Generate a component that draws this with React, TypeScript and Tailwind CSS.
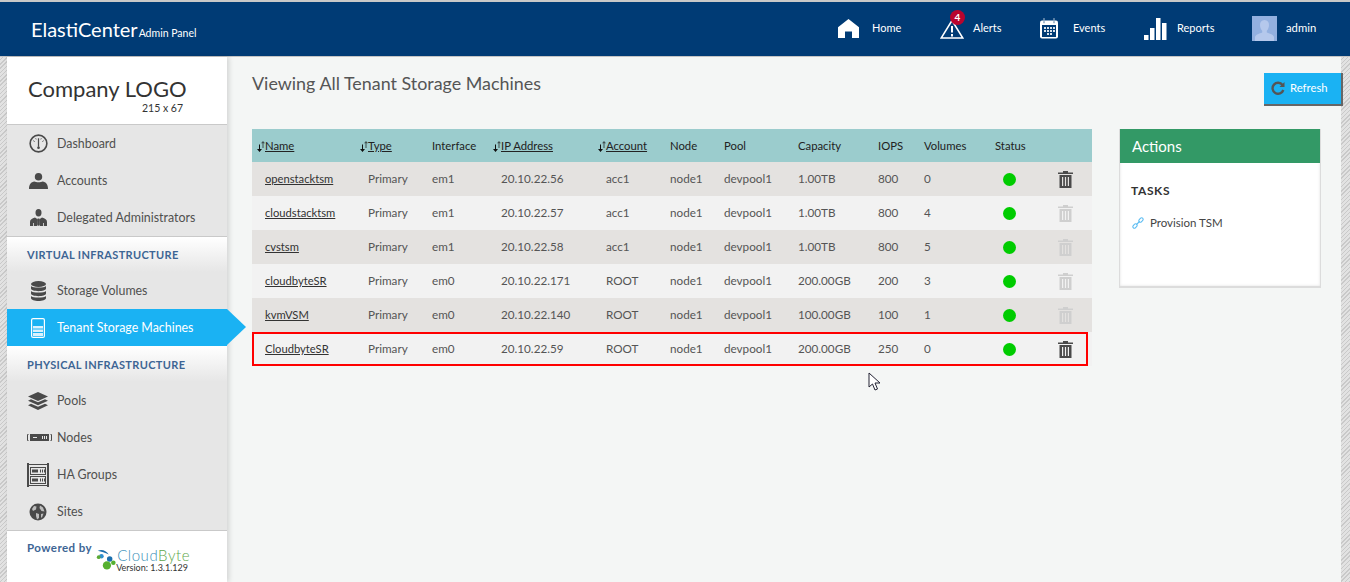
import React from "react";

const font = "font-['Lato','Noto_Sans',sans-serif]";

const Trash = ({ off }: { off?: boolean }) => (
  <svg width="15" height="17" viewBox="0 0 15 17" className={off ? "text-[#cfcfcf]" : "text-[#4a4a4a]"} fill="currentColor">
    <path d="M5 0h5v1.500h5V3H0V1.500h5z" />
    <path d="M1.500 4h12v13h-12zM4 6v9h1.200V6zM6.900 6v9h1.200V6zM9.800 6v9H11V6z" fillRule="evenodd" />
  </svg>
);

const Sort = () => (
  <svg width="8" height="11" viewBox="0 0 8 11" className="shrink-0">
    <path d="M2 3.500V8H0l2.500 3L5 8H3V3.500z" fill="#111" />
    <path d="M5.500 7V2.300H4L6 0l2 2.300H6.500V7z" fill="#3f4f4f" />
  </svg>
);

const IconDash = () => (
  <svg width="19" height="19" viewBox="0 0 20 20" fill="none" stroke="#4a4a4a">
    <circle cx="10" cy="10" r="8.800" strokeWidth="1.700" />
    <path d="M10 4.500v9" strokeWidth="1.300" />
    <circle cx="10" cy="14.500" r="1.400" fill="#4a4a4a" stroke="none" />
    <path d="M4.500 7 6 8M15.500 7 14 8M7 4.500l.6 1.200M13 4.500l-.6 1.200" strokeWidth=".9" />
  </svg>
);
const IconUser = () => (
  <svg width="19" height="16" viewBox="0 0 19 16" fill="#4a4a4a">
    <ellipse cx="9.500" cy="3.800" rx="3.700" ry="3.800" />
    <path d="M0 16c0-5 2-7 5.500-7.600 1 1 7 1 8 0C17 9 19 11 19 16z" />
  </svg>
);
const IconAdmin = () => (
  <svg width="17" height="17" viewBox="0 0 17 17" fill="#4a4a4a">
    <ellipse cx="8.500" cy="3.700" rx="3" ry="3.700" />
    <path d="M0 17v-4c0-2.500 2-3.600 5-4.500L8 10.500 7.300 17zM17 17v-4c0-2.500-2-3.600-5-4.500L9 10.500l.7 6.500z" />
    <path d="M7.500 9.500h2l-.3 1.500.6 4.500-1.300 1.500-1.300-1.500.6-4.500z" />
    <path d="M3 14h.8v3H3zM13.200 14h.8v3h-.8z" fill="#e6e6e6" />
  </svg>
);
const IconDb = () => (
  <svg width="15" height="20" viewBox="0 0 15 20" fill="#4a4a4a">
    <ellipse cx="7.500" cy="3" rx="7.500" ry="3" />
    <path d="M0 5c1.500 2 13.500 2 15 0v2.500c0 3.500-15 3.500-15 0zM0 10c1.500 2 13.500 2 15 0v2.600c0 3.500-15 3.500-15 0zM0 15c1.500 2 13.500 2 15 0v2c0 4-15 4-15 0z" />
  </svg>
);
const IconTsm = () => (
  <svg width="14" height="20" viewBox="0 0 14 20">
    <rect x=".6" y=".6" width="12.800" height="18.800" rx="1.500" fill="none" stroke="#fff" strokeWidth="1.200" />
    <rect x="2" y="8" width="10" height="2.500" fill="#d9f1fd" />
    <rect x="2" y="11.500" width="10" height="2.500" fill="#d9f1fd" />
    <rect x="2" y="15" width="10" height="3" fill="#d9f1fd" />
  </svg>
);
const IconPools = () => (
  <svg width="20" height="18" viewBox="0 0 20 18" fill="#4a4a4a">
    <path d="M10 0l10 4.500-10 4.500L0 4.500z" />
    <path d="M3 7.300l7 3 7-3 3 1.500-10 4.400L0 8.800z" />
    <path d="M3 11.800l7 3 7-3 3 1.500L10 18 0 13.300z" />
  </svg>
);
const IconNodes = () => (
  <svg width="25" height="7" viewBox="0 0 25 7" className="translate-x-[1px]">
    <rect x="3" y="0" width="19" height="7" fill="#4a4a4a" />
    <path d="M1.500.500H.500v6h1M23.500.500h1v6h-1" fill="none" stroke="#4a4a4a" />
    <rect x="6" y="3" width="4" height="1" fill="#e6e6e6" />
    <path d="M15 2h1v3h-1zM17 2h1v3h-1zM19 2h1v3h-1z" fill="#e6e6e6" />
  </svg>
);
const IconHa = () => (
  <svg width="22" height="24" viewBox="0 0 22 24">
    <path d="M0 0h2v24H0zM20 0h2v24h-2zM2 1h18v1H2zM2 22h18v1H2z" fill="#4a4a4a" />
    <rect x="3.500" y="4.500" width="15" height="7" fill="none" stroke="#4a4a4a" />
    <rect x="3.500" y="13.500" width="15" height="7" fill="none" stroke="#4a4a4a" />
    <path d="M5 6.500h6v3H5zM13 6.500h1v3h-1zM15 6.500h1v3h-1zM17 6.500h1v3h-1zM5 15.500h6v3H5zM13 15.500h1v3h-1zM15 15.500h1v3h-1zM17 15.500h1v3h-1z" fill="#4a4a4a" />
  </svg>
);
const IconSites = () => (
  <svg width="18" height="18" viewBox="0 0 18 18">
    <circle cx="9" cy="9" r="8.500" fill="#4a4a4a" />
    <path d="M5 3l2.500.5-.5 3-3 1.500-1-2zM11 2.500l3 2 1.500 4-3-.5-2-3zM7 10l3 1 0 4-2 1.500-1-3.500zM12 11l2.500-.5-1.500 4-1 0z" fill="#bdbdbd" />
  </svg>
);

const Item = ({ icon, label, active }: { icon: React.ReactNode; label: string; active?: boolean }) => (
  <div className={`relative flex h-[37px] items-center text-[12.4px] ${active ? "bg-[#1ab2f3] text-white" : "text-[#50504f]"}`}>
    <div className="flex w-[50px] shrink-0 justify-center pl-[13px] pr-[1px]">{icon}</div>
    <span className="pt-[2px]">{label}</span>
    {active && (
      <span className="absolute left-full top-0 h-0 w-0 border-y-[18.5px] border-l-[19px] border-y-transparent border-l-[#1ab2f3]" />
    )}
  </div>
);

const Section = ({ label, border }: { label: string; border?: boolean }) => (
  <div className={`flex h-[36px] items-center bg-gradient-to-b from-white to-[#e6e6e6] pl-[20px] pt-[2px] text-[11px] font-bold tracking-[0.35px] text-[#3d6594] ${border ? "border-t border-[#c9c9c9]" : ""}`}>
    {label}
  </div>
);

const NavItem = ({ icon, label, w }: { icon: React.ReactNode; label: string; w: string }) => (
  <div className={`flex items-center ${w}`}>
    {icon}
    <span className="text-[11px] text-white">{label}</span>
  </div>
);

const rows = [
  ["openstacktsm", "Primary", "em1", "20.10.22.56", "acc1", "node1", "devpool1", "1.00TB", "800", "0", true],
  ["cloudstacktsm", "Primary", "em1", "20.10.22.57", "acc1", "node1", "devpool1", "1.00TB", "800", "4", false],
  ["cvstsm", "Primary", "em1", "20.10.22.58", "acc1", "node1", "devpool1", "1.00TB", "800", "5", false],
  ["cloudbyteSR", "Primary", "em0", "20.10.22.171", "ROOT", "node1", "devpool1", "200.00GB", "200", "3", false],
  ["kvmVSM", "Primary", "em0", "20.10.22.140", "ROOT", "node1", "devpool1", "100.00GB", "100", "1", false],
  ["CloudbyteSR", "Primary", "em0", "20.10.22.59", "ROOT", "node1", "devpool1", "200.00GB", "250", "0", true],
] as const;

const Head = ({ label, sort, className = "" }: { label: string; sort?: boolean; className?: string }) => (
  <th className={`p-0 pt-[1px] text-left text-[11.3px] font-normal text-[#222] ${className}`}>
    {sort ? (
      <span className="flex items-center">
        <Sort />
        <span className="underline">{label}</span>
      </span>
    ) : (
      label
    )}
  </th>
);

export default function App() {
  return (
    <div className={`flex h-[582px] w-full flex-col overflow-hidden bg-[repeating-linear-gradient(135deg,#c9c9c9_0,#c9c9c9_1px,#e2e2e2_1px,#e2e2e2_3px)] ${font}`}>
      <header className="flex h-[57px] shrink-0 items-center justify-between border-t-2 border-b border-t-[#c8c8c8] border-b-[#c4c4c4] bg-[#003b75] pb-[1px] pl-[31px]">
        <div className="flex items-baseline text-white">
          <span className="text-[20px]">ElastiCenter</span>
          <span className="ml-[1px] text-[10.5px]">Admin Panel</span>
        </div>
        <nav className="flex items-center">
          <NavItem
            w="w-[102px]"
            label="Home"
            icon={
              <svg width="21" height="19" viewBox="0 0 21 19" fill="#fff" className="mr-[13px]">
                <path d="M10.500 0l10.500 8.300V19h-7v-6.500H7V19H0V8.300z" />
              </svg>
            }
          />
          <NavItem
            w="w-[100px]"
            label="Alerts"
            icon={
              <span className="relative mr-[9px] block h-[19px] w-[24px]">
                <svg width="24" height="20" viewBox="0 0 24 20" fill="none">
                  <path d="M12 1.500 1.200 19h21.600z" stroke="#fff" strokeWidth="1.500" />
                  <path d="M11 7h2v6.500h-2zM11 15h2v2.500h-2z" fill="#fff" />
                </svg>
                <span className="absolute left-[10px] top-[-9px] flex h-[15px] w-[15px] items-center justify-center rounded-full bg-[#b8052e] text-[10px] font-bold text-white">
                  4
                </span>
              </span>
            }
          />
          <NavItem
            w="w-[104px]"
            label="Events"
            icon={
              <svg width="18" height="21" viewBox="0 0 18 21" className="mr-[15px]">
                <rect x="0" y="2.500" width="18" height="18" rx="2" fill="#fff" />
                <path d="M3.500 0h1v5h-1zM13.500 0h1v5h-1z" fill="#fff" stroke="#003b75" strokeWidth=".3" />
                <rect x="2" y="7" width="14" height="12" fill="#003b75" />
                <path d="M4 9h2v2H4zM7 9h2v2H7zM10 9h2v2h-2zM13 9h2v2h-2zM4 12h2v2H4zM7 12h2v2H7zM10 12h2v2h-2zM13 12h2v2h-2zM7 15h2v2H7zM10 15h2v2h-2z" fill="#fff" opacity=".85" />
              </svg>
            }
          />
          <NavItem
            w="w-[108px]"
            label="Reports"
            icon={
              <svg width="23" height="22" viewBox="0 0 23 22" fill="#fff" className="mr-[10px]">
                <path d="M0 17h4.500v5H0zM6 10h4.500v12H6zM12 0h4.500v22H12zM18 5h4.500v17H18z" />
              </svg>
            }
          />
          <div className="flex w-[98px] items-center">
            <svg width="25" height="25" viewBox="0 0 25 25" className="mr-[9px]">
              <rect width="25" height="25" fill="#93b0e0" />
              <path d="M12.500 4c3 0 4.500 2.200 4.500 5 0 2.500-1 4.500-2.200 5.700v1.800c2.700 1 6.700 2 7.200 4.500V25H3v-4c.5-2.500 4.500-3.500 7.200-4.500v-1.800C9 13.500 8 11.500 8 9c0-2.800 1.500-5 4.500-5z" fill="#b5c8ec" />
            </svg>
            <span className="text-[11.3px] text-white">admin</span>
          </div>
        </nav>
      </header>

      <div className="flex min-h-0 flex-1 pl-[7px] pr-[9px]">
        <aside className="relative z-10 flex h-full w-[220px] shrink-0 flex-col bg-[#e6e6e6] shadow-[2px_0_5px_rgba(0,0,0,0.14)]">
          <div className="flex h-[68px] shrink-0 flex-col border-b border-[#c9c9c9] bg-white pl-[21px] pt-[19px]">
            <span className="text-[22px] leading-[26px] text-[#333]">Company LOGO</span>
            <span className="ml-[114px] text-[10.5px] leading-[12px] text-[#333]">215 x 67</span>
          </div>
          <Item icon={<IconDash />} label="Dashboard" />
          <Item icon={<IconUser />} label="Accounts" />
          <Item icon={<IconAdmin />} label="Delegated Administrators" />
          <Section label="VIRTUAL INFRASTRUCTURE" border />
          <Item icon={<IconDb />} label="Storage Volumes" />
          <Item icon={<IconTsm />} label="Tenant Storage Machines" active />
          <Section label="PHYSICAL INFRASTRUCTURE" />
          <Item icon={<IconPools />} label="Pools" />
          <Item icon={<IconNodes />} label="Nodes" />
          <Item icon={<IconHa />} label="HA Groups" />
          <Item icon={<IconSites />} label="Sites" />
          <div className="flex flex-1 items-start border-t border-[#c9c9c9] bg-white pl-[20px] pt-[9px]">
            <span className="text-[11.5px] font-bold leading-[15px] tracking-[0.45px] text-[#3d6594]">Powered by</span>
            <div className="ml-[3px] mt-[8px] flex">
              <svg width="22" height="22" viewBox="0 0 22 24" className="shrink-0">
                <path d="M2 3c5-2 9 0 12 4-4-2-8-3-12-4z" fill="#1b6fae" />
                <circle cx="6" cy="9" r="2.500" fill="#2f8fd0" />
                <circle cx="15" cy="12" r="3" fill="#1b6fae" />
                <circle cx="3" cy="10" r="2" fill="#5caa34" />
                <circle cx="12" cy="19" r="4.500" fill="#56b030" />
                <circle cx="19" cy="16" r="2.500" fill="#56b030" />
              </svg>
              <div className="flex flex-col">
                <span className="text-[15px] font-light leading-[14px] tracking-[0.55px] text-[#3c8fb8]">Cloud<span className="text-[#5ea74a]">Byte</span></span>
                <span className="ml-[-1px] text-[9px] leading-[11px] text-[#333]">Version: 1.3.1.129</span>
              </div>
            </div>
          </div>
        </aside>

        <main className="flex min-w-0 flex-1 flex-col bg-[#f4f6f5] pl-[25px] pt-[14px]">
          <div className="flex h-[58px] shrink-0 items-start justify-between">
            <h1 className="text-[17.9px] leading-[24px] text-[#555]">Viewing All Tenant Storage Machines</h1>
            <button className="mr-[-2px] mt-[2px] flex h-[33px] w-[79px] items-center gap-[5px] border-r-2 border-b-2 border-[#666] bg-[#1ab2f3] pb-[1px] pl-[7px] text-[11.3px] text-white">
              <svg width="14" height="14" viewBox="0 0 14 14" fill="none" stroke="#555" strokeWidth="2.400">
                <path d="M11.500 4A5.500 5.500 0 1 0 12.300 9" />
                <path d="M13.500 1v5h-5z" fill="#555" stroke="none" />
              </svg>
              Refresh
            </button>
          </div>

          <div className="flex items-start">
            <div className="relative w-[840px] shrink-0">
              <table className="w-[840px] table-fixed border-collapse">
                <colgroup>
                  <col className="w-[104px]" />
                  <col className="w-[76px]" />
                  <col className="w-[59px]" />
                  <col className="w-[105px]" />
                  <col className="w-[74px]" />
                  <col className="w-[54px]" />
                  <col className="w-[74px]" />
                  <col className="w-[80px]" />
                  <col className="w-[46px]" />
                  <col className="w-[71px]" />
                  <col className="w-[50px]" />
                  <col className="w-[47px]" />
                </colgroup>
                <thead>
                  <tr className="h-[33px] bg-[#9bcccd]">
                    <Head label="Name" sort className="pl-[5px]" />
                    <Head label="Type" sort className="pl-[4px]" />
                    <Head label="Interface" />
                    <Head label="IP Address" sort className="pl-[2px]" />
                    <Head label="Account" sort className="pl-[2px]" />
                    <Head label="Node" />
                    <Head label="Pool" />
                    <Head label="Capacity" />
                    <Head label="IOPS" />
                    <Head label="Volumes" />
                    <Head label="Status" />
                    <th className="p-0" />
                  </tr>
                </thead>
                <tbody>
                  {rows.map((r, i) => (
                    <tr key={r[0]} className={`h-[34px] text-[11.7px] text-[#555] ${i % 2 ? "bg-[#f2f2f2]" : "bg-[#e4e2e0]"}`}>
                      <td className="p-0 pl-[13px]"><span className="text-[11.2px] text-[#333] underline">{r[0]}</span></td>
                      <td className="p-0 pl-[12px]">{r[1]}</td>
                      <td className="p-0">{r[2]}</td>
                      <td className="p-0 pl-[10px]">{r[3]}</td>
                      <td className="p-0 pl-[10px]">{r[4]}</td>
                      <td className="p-0">{r[5]}</td>
                      <td className="p-0">{r[6]}</td>
                      <td className="p-0">{r[7]}</td>
                      <td className="p-0">{r[8]}</td>
                      <td className="p-0">{r[9]}</td>
                      <td className="p-0 pl-[8px]"><span className="block h-[13px] w-[13px] rounded-full bg-[#00cc00]" /></td>
                      <td className="p-0 pl-[13px]"><Trash off={!r[10]} /></td>
                    </tr>
                  ))}
                </tbody>
              </table>
              <div className="pointer-events-none absolute bottom-0 left-0 h-[34px] w-[836px] border-2 border-[#f00]" />
              <svg width="14" height="20" viewBox="0 0 14 20" className="absolute left-[616px] top-[243px]">
                <path d="M1 1v14l3.500-3 2.500 6 2.500-1-2.500-6H12z" fill="#fff" stroke="#223" strokeWidth="1" />
              </svg>
            </div>

            <section className="ml-[27px] h-[159px] w-[202px] shrink-0 border border-t-0 border-b-2 border-[#dcdcdc] bg-white shadow-[inset_0_0_3px_rgba(0,0,0,0.12)]">
              <div className="flex h-[34px] items-center bg-[#339966] pl-[12px] text-[15px] text-white">Actions</div>
              <h2 className="mt-[21px] pl-[11px] text-[12px] font-bold leading-[14px] tracking-[0.6px] text-[#333]">TASKS</h2>
              <div className="mt-[18px] flex items-center pl-[12px] text-[11.5px] leading-[14px] text-[#444]">
                <svg width="12" height="12" viewBox="0 0 12 12" fill="none" stroke="#5bbcf2" strokeWidth="1.100" className="mr-[6px]">
                  <rect x="-2.400" y="-1.500" width="4.800" height="3" rx="1.400" transform="translate(3 9) rotate(-45)" />
                  <rect x="-2.400" y="-1.500" width="4.800" height="3" rx="1.400" transform="translate(9 3) rotate(-45)" />
                  <path d="M4.500 7.500l3-3" />
                </svg>
                Provision TSM
              </div>
            </section>
          </div>
        </main>
      </div>
    </div>
  );
}
